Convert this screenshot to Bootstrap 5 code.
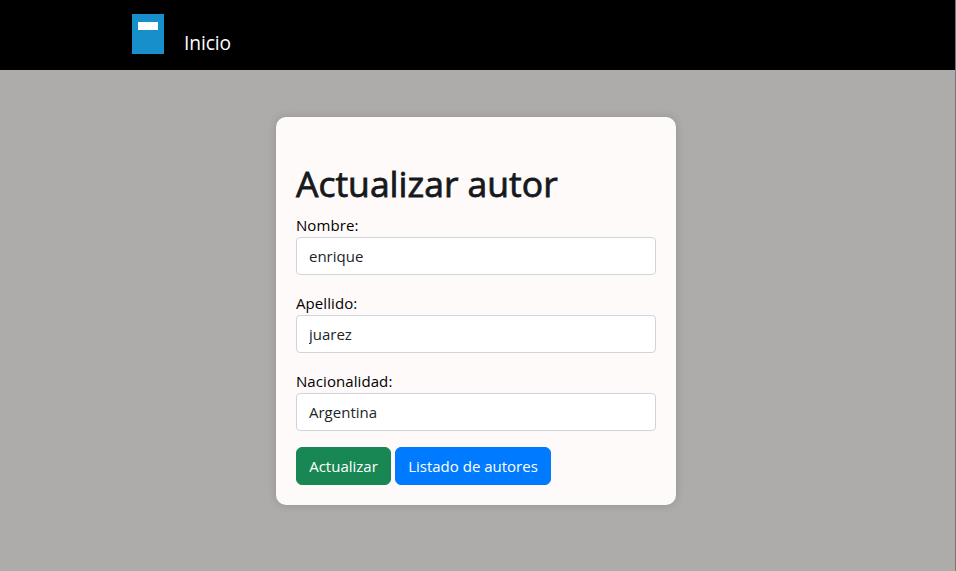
<!DOCTYPE html>
<html lang="es">
<head>
<meta charset="utf-8">
<meta name="viewport" content="width=device-width, initial-scale=1">
<title>Actualizar autor</title>
<link href="https://cdn.jsdelivr.net/npm/bootstrap@5.3.0/dist/css/bootstrap.min.css" rel="stylesheet">
<style>
body{background:#adacaa;font-family:"Segoe UI","Open Sans","Noto Sans",sans-serif;min-height:100vh;border-right:1px solid #777}
.topbar{background:#000;height:70px;padding:14px 0 0 132px}
.topbar .nav-link{color:#fff;font-size:19.2px;line-height:30px;margin:14px 0 0 20px;letter-spacing:-.1px}
.author-card{width:400px;margin:47px 0 0 276px;padding:40px 20px 20px;background:#fffafa;border-radius:10px;box-shadow:0 0 10px rgba(0,0,0,.15)}
.author-card h1{font-size:35.5px;line-height:48px;height:48px;padding-top:2px;font-weight:500;color:#16191c;white-space:nowrap;-webkit-text-stroke:.8px #16191c}
.author-card label{display:block;font-size:15px;line-height:24px;color:#000;letter-spacing:.08px}
.author-card .form-control{height:38px;font-size:15px;border-color:#ced4da;border-radius:4px;background:#fff;color:#212529}
.author-card .btn{height:38px;font-size:15px;line-height:24px;padding:6px 0;white-space:nowrap}
.btn-update{width:95px}
.btn-list{width:156px;background:#007bff;border-color:#007bff;color:#fff}
</style>
<script src="https://cdn.jsdelivr.net/npm/bootstrap@5.3.0/dist/js/bootstrap.bundle.min.js"></script>
</head>
<body>
<nav class="topbar d-flex align-items-start">
  <svg width="32" height="40" viewBox="0 0 32 40" aria-hidden="true"><path fill="#168fcb" d="M0 0h32v40H0z"/><path fill="#fff" d="M6 8h20v8H6z"/></svg>
  <a class="nav-link p-0" href="#">Inicio</a>
</nav>
<main class="author-card">
  <h1 class="mb-2">Actualizar autor</h1>
  <form>
    <div class="mb-3"><label for="nombre">Nombre:</label><input class="form-control" id="nombre" value="enrique"></div>
    <div class="mb-3"><label for="apellido">Apellido:</label><input class="form-control" id="apellido" value="juarez"></div>
    <div class="mb-3"><label for="nacionalidad">Nacionalidad:</label><input class="form-control" id="nacionalidad" value="Argentina"></div>
    <div class="d-flex gap-1"><button type="button" class="btn btn-success btn-update">Actualizar</button><a class="btn btn-list" href="#">Listado de autores</a></div>
  </form>
</main>
</body>
</html>
